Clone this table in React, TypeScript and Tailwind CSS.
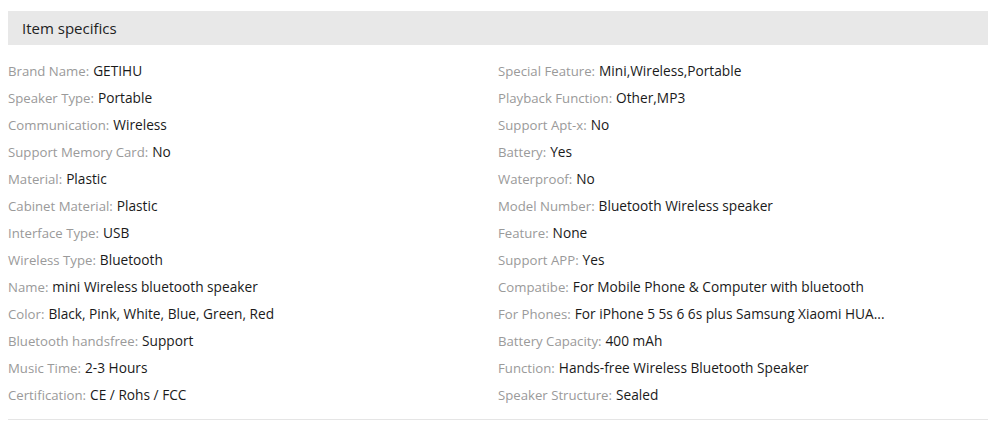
const left: [string, string][] = [
  ["Brand Name", "GETIHU"],
  ["Speaker Type", "Portable"],
  ["Communication", "Wireless"],
  ["Support Memory Card", "No"],
  ["Material", "Plastic"],
  ["Cabinet Material", "Plastic"],
  ["Interface Type", "USB"],
  ["Wireless Type", "Bluetooth"],
  ["Name", "mini Wireless bluetooth speaker"],
  ["Color", "Black, Pink, White, Blue, Green, Red"],
  ["Bluetooth handsfree", "Support"],
  ["Music Time", "2-3 Hours"],
  ["Certification", "CE / Rohs / FCC"],
];

const right: [string, string][] = [
  ["Special Feature", "Mini,Wireless,Portable"],
  ["Playback Function", "Other,MP3"],
  ["Support Apt-x", "No"],
  ["Battery", "Yes"],
  ["Waterproof", "No"],
  ["Model Number", "Bluetooth Wireless speaker"],
  ["Feature", "None"],
  ["Support APP", "Yes"],
  ["Compatibe", "For Mobile Phone & Computer with bluetooth"],
  ["For Phones", "For iPhone 5 5s 6 6s plus Samsung Xiaomi HUA..."],
  ["Battery Capacity", "400 mAh"],
  ["Function", "Hands-free Wireless Bluetooth Speaker"],
  ["Speaker Structure", "Sealed"],
];

function Column({ items }: { items: [string, string][] }) {
  return (
    <ul className="flex flex-col">
      {items.map(([k, v]) => (
        <li key={k} className="h-[27px] flex items-center whitespace-nowrap">
          <span className="text-[#9a9a9a] text-[13.2px]">{k}:</span>
          <span className="text-[#1a1a1a] text-[13.7px] ml-[4px]">{v}</span>
        </li>
      ))}
    </ul>
  );
}

export default function App() {
  return (
    <div className="w-[1000px] h-[421px] bg-white px-[8px] pt-[11px] pr-[12px] font-['Open_Sans',sans-serif] text-[13px]">
      <div className="h-[34px] bg-[#e8e8e8] flex items-center pl-[14px] text-[15px] text-[#222]">
        Item specifics
      </div>
      <div className="grid grid-cols-2 mt-[13px] pb-[10px] border-b border-[#e5e5e5]">
        <Column items={left} />
        <Column items={right} />
      </div>
    </div>
  );
}
